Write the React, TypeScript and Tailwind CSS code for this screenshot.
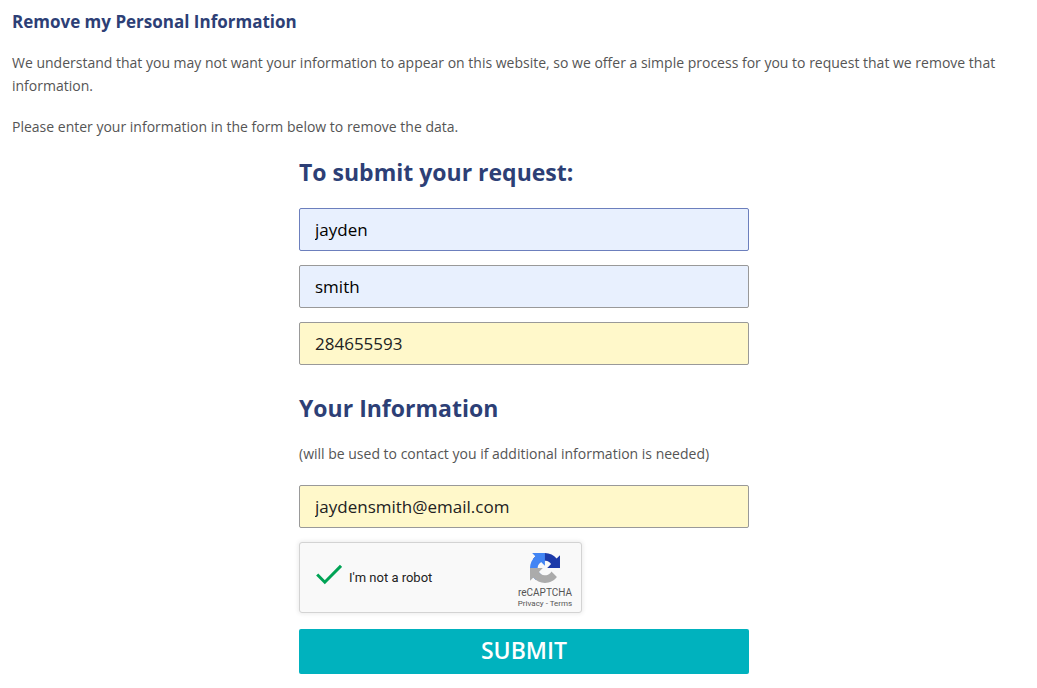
import { useState } from "react";
import type { FormEvent } from "react";

const inputCls =
  "block h-[43px] w-full rounded-xs border border-[#999999] px-[15px] text-[17px] focus:border-[#6c7fbd] focus:outline-none";

const headingCls = "text-[23px] leading-8 font-bold text-[#2d3f76]";

function RecaptchaLogo() {
  return (
    <svg viewBox="0 0 64 64" className="h-[30px] w-[30px]" aria-hidden="true">
      <path
        fill="#1c3aa9"
        d="M64 31.955l-.033-1.37V4.687l-7.16 7.16C50.948 4.674 42.033.093 32.05.093c-10.4 0-19.622 4.96-25.458 12.64l11.736 11.86a15.55 15.55 0 0 1 4.754-5.334c2.05-1.6 4.952-2.906 8.968-2.906.485 0 .86.057 1.135.163 4.976.393 9.288 3.14 11.828 7.124l-8.307 8.307L64 31.953"
      />
      <path
        fill="#4285f4"
        d="M31.862.094l-1.37.033H4.594l7.16 7.16C4.58 13.147 0 22.06 0 32.046c0 10.4 4.96 19.622 12.64 25.458L24.5 45.768a15.55 15.55 0 0 1-5.334-4.754c-1.6-2.05-2.906-4.952-2.906-8.968 0-.485.057-.86.163-1.135.393-4.976 3.14-9.288 7.124-11.828l8.307 8.307L31.86.095"
      />
      <path
        fill="#ababab"
        d="M.001 32.045l.033 1.37v25.898l7.16-7.16c5.86 7.173 14.774 11.754 24.76 11.754 10.4 0 19.622-4.96 25.458-12.64l-11.736-11.86a15.55 15.55 0 0 1-4.754 5.334c-2.05 1.6-4.952 2.906-8.968 2.906-.485 0-.86-.057-1.135-.163-4.976-.393-9.288-3.14-11.828-7.124l8.307-8.307c-10.522.04-22.4.066-27.295-.005"
      />
    </svg>
  );
}

function Recaptcha() {
  const [checked, setChecked] = useState(true);

  return (
    <div className="flex h-[71px] w-[283px] items-center justify-between rounded-[3px] border border-[#d3d3d3] bg-[#f9f9f9] pl-4 pr-2 font-[Roboto,sans-serif] shadow-[0_0_4px_1px_rgba(0,0,0,0.08)]">
      <label className="flex items-center gap-[7px] pb-1 text-[13px] text-[#222222]">
        <span className="relative block h-6 w-[26px]">
          <input
            type="checkbox"
            checked={checked}
            onChange={(e) => setChecked(e.target.checked)}
            className="block h-6 w-6 appearance-none rounded-xs border-2 border-[#c1c1c1] bg-white checked:border-0 checked:bg-transparent"
          />
          {checked && (
            <svg
              viewBox="0 0 26 24"
              className="pointer-events-none absolute inset-0"
              fill="none"
              stroke="#00a355"
              strokeWidth="3"
              aria-hidden="true"
            >
              <path d="M1.2 10.5 8.8 18.2 25 1.8" />
            </svg>
          )}
        </span>
        <span className="pt-1">I'm not a robot</span>
      </label>
      <div className="flex w-14 flex-col items-center pt-[6px] text-[#555555]">
        <RecaptchaLogo />
        <span className="pt-1 text-[10px] leading-3">reCAPTCHA</span>
        <span className="whitespace-nowrap text-[8px] leading-[10px]">
          <a href="#privacy">Privacy</a> - <a href="#terms">Terms</a>
        </span>
      </div>
    </div>
  );
}

export default function App() {
  const [form, setForm] = useState({
    firstName: "jayden",
    lastName: "smith",
    recordId: "284655593",
    email: "jaydensmith@email.com",
  });

  function update(field: keyof typeof form, value: string) {
    setForm((prev) => ({ ...prev, [field]: value }));
  }

  function submit(e: FormEvent) {
    e.preventDefault();
  }

  return (
    <main className="bg-white pt-[10px] pr-px pb-[14px] pl-3 font-['Open_Sans',sans-serif] text-sm leading-[23px] text-[#555555]">
      <h1 className="text-[17px] leading-[23px] font-bold text-[#2d3f76]">
        Remove my Personal Information
      </h1>
      <p className="mt-[18px]">
        We understand that you may not want your information to appear on this
        website, so we offer a simple process for you to request that we remove
        that information.
      </p>
      <p className="mt-[18px]">
        Please enter your information in the form below to remove the data.
      </p>

      <form onSubmit={submit} className="mx-auto mt-[18px] max-w-[450px]">
        <h2 className={headingCls}>To submit your request:</h2>
        <div className="mt-5 space-y-[14px]">
          <input
            type="text"
            aria-label="First name"
            value={form.firstName}
            onChange={(e) => update("firstName", e.target.value)}
            className={`${inputCls} border-[#6c7fbd]! bg-[#e8f0fe] text-black`}
          />
          <input
            type="text"
            aria-label="Last name"
            value={form.lastName}
            onChange={(e) => update("lastName", e.target.value)}
            className={`${inputCls} bg-[#e8f0fe] text-black`}
          />
          <input
            type="text"
            aria-label="Record ID"
            value={form.recordId}
            onChange={(e) => update("recordId", e.target.value)}
            className={`${inputCls} bg-[#fff8ca] text-[#222222]`}
          />
        </div>

        <h2 className={`${headingCls} mt-[27px]`}>Your Information</h2>
        <p className="mt-[18px]">
          (will be used to contact you if additional information is needed)
        </p>
        <div className="mt-5 space-y-[14px]">
          <input
            type="email"
            aria-label="Email"
            value={form.email}
            onChange={(e) => update("email", e.target.value)}
            className={`${inputCls} bg-[#fff8ca] text-[#222222]`}
          />
          <Recaptcha />
        </div>
        <button
          type="submit"
          className="mt-4 block h-[45px] w-full rounded-xs bg-[#00b2be] pb-[2px] text-[23px] font-semibold text-white"
        >
          SUBMIT
        </button>
      </form>
    </main>
  );
}
